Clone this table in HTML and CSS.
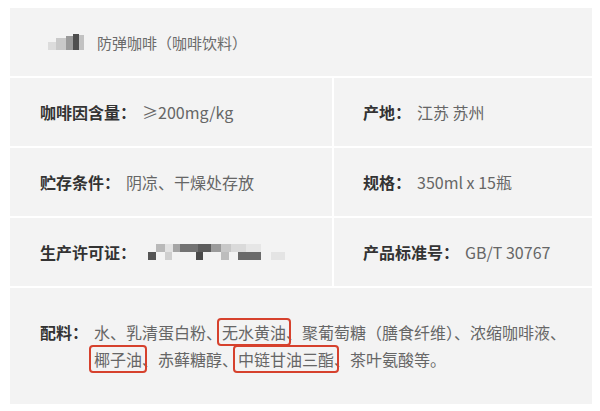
FILE: index.html
```html
<!DOCTYPE html>
<html lang="zh-CN">
<head>
    <meta charset="UTF-8">
    <meta name="viewport" content="width=device-width, initial-scale=1.0">
    <title>产品参数</title>
    <link rel="stylesheet" href="styles.css">
</head>
<body>
    <div class="spec">
        <div class="cell wide name">
            <!-- mosaic over the brand name -->
            <svg class="mosaic" width="36" height="17" viewBox="0 0 36 17">
                <rect x="0" y="8" width="8" height="8" fill="#dcdcdc"/>
                <rect x="8" y="4" width="10" height="12" fill="#c9c9c9"/>
                <rect x="18" y="2" width="7" height="14" fill="#9a9a9a"/>
                <rect x="25" y="0" width="6" height="16" fill="#4e4e4e"/>
                <rect x="31" y="1" width="5" height="15" fill="#c2c2c2"/>
            </svg>
            <span class="title">防弹咖啡（咖啡饮料）</span>
        </div>

        <div class="cell">
            <span class="label">咖啡因含量：</span><span class="value">≥200mg/kg</span>
        </div>
        <div class="cell right">
            <span class="label">产地：</span><span class="value">江苏 苏州</span>
        </div>

        <div class="cell">
            <span class="label">贮存条件：</span><span class="value">阴凉、干燥处存放</span>
        </div>
        <div class="cell right">
            <span class="label">规格：</span><span class="value">350ml x 15瓶</span>
        </div>

        <div class="cell">
            <span class="label">生产许可证：</span>
            <svg class="mosaic" width="138" height="17" viewBox="0 0 138 17">
                <rect x="8" y="0" width="9" height="8" fill="#b9b9b9"/>
                <rect x="17" y="0" width="8" height="8" fill="#e2e2e2"/>
                <rect x="25" y="0" width="7" height="8" fill="#a5a5a5"/>
                <rect x="32" y="0" width="18" height="8" fill="#727272"/>
                <rect x="50" y="0" width="13" height="8" fill="#5c5c5c"/>
                <rect x="63" y="0" width="10" height="8" fill="#9b9b9b"/>
                <rect x="73" y="0" width="10" height="8" fill="#c8c8c8"/>
                <rect x="83" y="0" width="15" height="8" fill="#dadada"/>
                <rect x="98" y="0" width="15" height="8" fill="#e6e6e6"/>
                <rect x="0" y="8" width="8" height="8" fill="#555555"/>
                <rect x="17" y="8" width="7" height="8" fill="#cfcfcf"/>
                <rect x="48" y="8" width="7" height="8" fill="#4a4a4a"/>
                <rect x="73" y="8" width="8" height="8" fill="#bdbdbd"/>
                <rect x="90" y="8" width="23" height="8" fill="#6a6a6a"/>
                <rect x="123" y="8" width="14" height="8" fill="#e4e4e4"/>
            </svg>
        </div>
        <div class="cell right">
            <span class="label">产品标准号：</span><span class="value">GB/T 30767</span>
        </div>

        <div class="cell wide ingredients">
            <span class="label">配料：</span>
            <p class="value">水、乳清蛋白粉、<span class="mark">无水黄油</span>、聚葡萄糖（膳食纤维）、浓缩咖啡液、<span class="mark">椰子油</span>、赤藓糖醇、<span class="mark">中链甘油三酯</span>、茶叶氨酸等。</p>
        </div>
    </div>
</body>
</html>
```

FILE: styles.css
```css
body {
    margin: 0;
    background-color: #ffffff;
    font-family: "Noto Sans CJK SC", "Noto Sans", sans-serif;
}

.spec {
    display: grid;
    grid-template-columns: 322px 1fr;
    grid-template-rows: 68px 68px 68px 68px 116px;
    gap: 2px;
    width: 582px;
    margin: 8px 0 0 10px;
}

.cell {
    background-color: #f3f3f3;
    display: flex;
    align-items: center;
    padding-left: 30px;
    font-size: 16px;
}

.cell.right {
    padding-left: 29px;
}

.cell.wide {
    grid-column: 1 / 3;
}

.name {
    padding-left: 32px;
}

.mosaic {
    display: block;
    flex-shrink: 0;
}

.title {
    font-size: 15px;
    color: #6a6a6a;
    margin-left: 13px;
}

.label {
    color: #333333;
    font-weight: bold;
    margin-right: 6px;
    flex-shrink: 0;
}

.value {
    color: #666666;
}

.cell .mosaic {
    margin-left: 6px;
}

.ingredients {
    align-items: center;
}

.ingredients .label {
    align-self: flex-start;
    line-height: 27px;
    margin-top: 31px;
}

.ingredients .value {
    margin: 0;
    line-height: 27px;
    width: 480px;
}

.mark {
    position: relative;
}

.mark::after {
    content: "";
    position: absolute;
    top: -2px;
    bottom: -2px;
    left: -5px;
    right: -5px;
    border: 2px solid #d6412d;
    border-radius: 4px;
}
```
